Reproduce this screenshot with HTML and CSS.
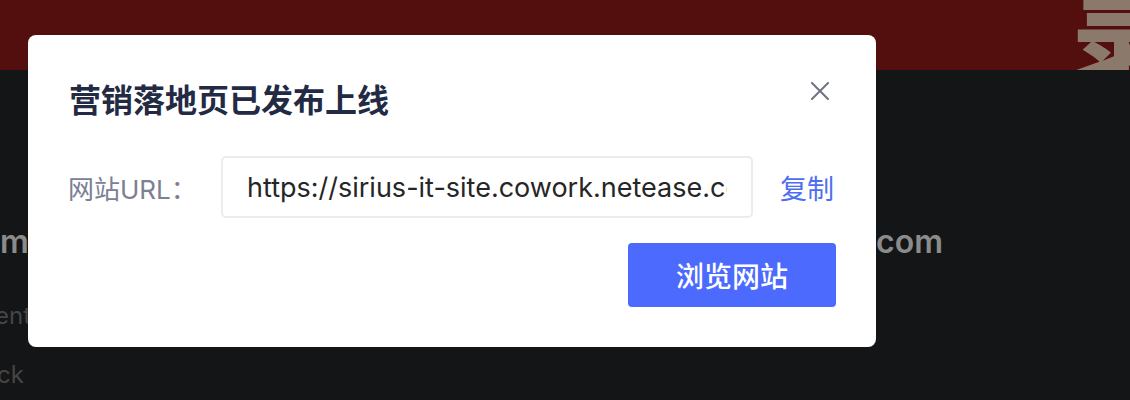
FILE: index.html
```html
<!DOCTYPE html>
<html lang="zh-CN">
<head>
  <meta charset="UTF-8">
  <meta name="viewport" content="width=device-width, initial-scale=1.0">

  <title>营销落地页</title>

  <link rel="stylesheet" href="styles.css">
</head>
<body>

<div class="page">
  <div class="banner">
    <span class="banner-mark">录</span>
  </div>

  <div class="site-info">
    <h2 class="site-domain">
      <span>mail.sirius</span>
      <span>cowork.netease.com</span>
    </h2>
    <p class="site-line">ent management</p>
    <p class="site-line">ck</p>
  </div>
</div>

<div class="mask">
  <div class="modal">
    <div class="modal-header">
      <h1 class="modal-title">营销落地页已发布上线</h1>
      <button class="close" aria-label="关闭">
        <svg width="18" height="18" viewBox="0 0 18 18">
          <path d="M1 1 L17 17 M17 1 L1 17" stroke="#6f7485" stroke-width="2" stroke-linecap="square" fill="none"/>
        </svg>
      </button>
    </div>

    <div class="url-row">
      <span class="url-label">网站URL：</span>
      <input class="url-input" type="text" readonly value="https://sirius-it-site.cowork.netease.com/landing/page">
      <a class="copy" href="#">复制</a>
    </div>

    <div class="modal-footer">
      <button class="primary">浏览网站</button>
    </div>
  </div>
</div>

</body>
</html>
```

FILE: styles.css
```css
body {
  margin: 0;
  background-color: #141517;
  font-family: Inter, "Noto Sans CJK SC", sans-serif;
  overflow: hidden;
}

.banner {
  height: 70px;
  background-color: #530e0e;
  display: flex;
  justify-content: flex-end;
  overflow: hidden;
}

.banner-mark {
  font-family: "Noto Sans CJK SC", sans-serif;
  font-weight: 900;
  font-size: 100px;
  line-height: 70px;
  color: #8b7a6b;
  margin-right: -42px;
}

.site-info {
  padding-top: 152px;
}

.site-domain {
  display: flex;
  justify-content: space-between;
  width: 943px;
  margin: 0;
  font-size: 32px;
  line-height: 40px;
  font-weight: 600;
  color: #8b8b8b;
}

.site-line {
  margin: 38px 0 0 -5px;
  font-size: 24px;
  line-height: 32px;
  color: #454545;
}

.site-line + .site-line {
  margin-top: 27px;
  margin-left: -3px;
}

/* modal */

.mask {
  position: fixed;
  inset: 0;
  padding: 35px 0 0 28px;
}

.modal {
  width: 848px;
  height: 312px;
  box-sizing: border-box;
  padding: 43px 40px 40px 40px;
  background-color: #fff;
  border-radius: 8px;
}

.modal-header {
  display: flex;
  justify-content: space-between;
  align-items: center;
}

.modal-title {
  margin: 0 0 0 1px;
  font-family: "Noto Sans CJK SC", sans-serif;
  font-size: 32px;
  line-height: 40px;
  font-weight: 600;
  color: #232a43;
}

.close {
  border: none;
  background: none;
  padding: 0;
  margin: -14px 7px 0 0;
  width: 18px;
  height: 18px;
  cursor: pointer;
}

.url-row {
  display: flex;
  align-items: center;
  margin-top: 38px;
  height: 62px;
}

.url-label {
  width: 153px;
  flex-shrink: 0;
  font-size: 26px;
  color: #7b8093;
}

.url-input {
  width: 532px;
  height: 62px;
  box-sizing: border-box;
  padding: 0 24px;
  border: 2px solid #ebebf0;
  border-radius: 5px;
  font-family: Inter, "Noto Sans CJK SC", sans-serif;
  font-size: 27px;
  color: #262626;
  outline: none;
}

.copy {
  margin-left: 27px;
  font-size: 27px;
  color: #4e6ef2;
  text-decoration: none;
}

.modal-footer {
  display: flex;
  justify-content: flex-end;
  margin-top: 25px;
}

.primary {
  width: 208px;
  height: 64px;
  border: none;
  border-radius: 4px;
  background-color: #4c6afe;
  color: #fff;
  font-family: "Noto Sans CJK SC", sans-serif;
  font-size: 28px;
  font-weight: 500;
  cursor: pointer;
}
```
